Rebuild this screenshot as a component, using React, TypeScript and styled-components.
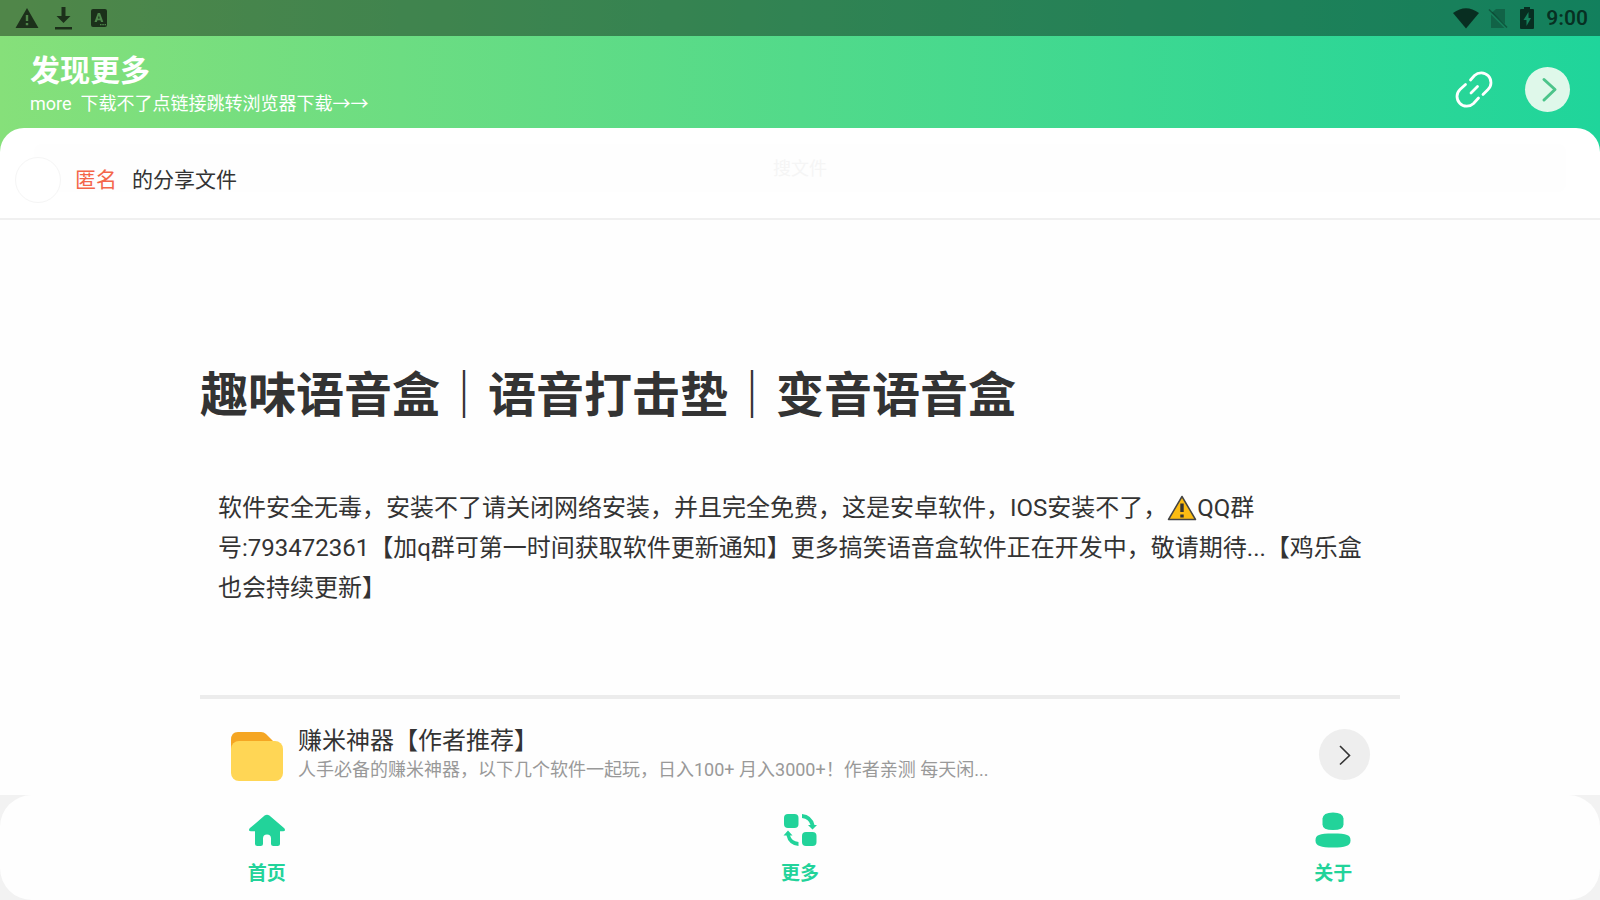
import React from 'react';
import styled, { createGlobalStyle } from 'styled-components';

const GlobalStyle = createGlobalStyle`
  *, *::before, *::after { box-sizing: border-box; }
  body {
    margin: 0;
    background: #fefefe;
    color: #333;
    font-family: Roboto, "Noto Sans CJK SC", sans-serif;
  }
  button, input { font: inherit; }
  h1, h2, p { margin: 0; }
`;

const Page = styled.div`
  min-height: 100vh;
  display: flex;
  flex-direction: column;
`;

const Top = styled.div`
  background: linear-gradient(90deg, #86e07a 0%, #52da8a 50%, #1fd59b 100%);
`;

const StatusBar = styled.div`
  height: 36px;
  padding: 0 12px 0 15px;
  display: flex;
  align-items: center;
  justify-content: space-between;
  background: rgba(0, 0, 0, 0.4);
  color: rgba(0, 0, 0, 0.64);
`;

const StatusGroup = styled.div<{ $gap: number }>`
  display: flex;
  align-items: center;
  gap: ${(p) => p.$gap}px;
  svg { display: block; }
`;

const Clock = styled.span`
  font-size: 21px;
  line-height: 36px;
  font-weight: 600;
`;

const Header = styled.header`
  height: 92px;
  padding: 0 30px;
  display: flex;
  align-items: flex-start;
  justify-content: space-between;
  color: #fff;
`;

const HeaderText = styled.div`
  padding-top: 17px;
`;

const HeaderTitle = styled.h1`
  font-size: 30px;
  line-height: 36px;
  font-weight: 700;
`;

const HeaderNote = styled.p`
  font-size: 18px;
  line-height: 30px;
  white-space: pre;
`;

const HeaderActions = styled.div`
  display: flex;
  align-items: center;
  gap: 30px;
  padding-top: 31px;
`;

const IconButton = styled.button<{ $size: number; $bg?: string }>`
  width: ${(p) => p.$size}px;
  height: ${(p) => p.$size}px;
  padding: 0;
  border: 0;
  border-radius: 50%;
  background: ${(p) => p.$bg ?? 'transparent'};
  display: grid;
  place-items: center;
  flex: none;
  cursor: pointer;
`;

const SheetTop = styled.div`
  display: grid;
  height: 92px;
  background: #fff;
  border-radius: 24px 24px 0 0;
  border-bottom: 2px solid #f0f0f0;
  > * { grid-area: 1 / 1; }
`;

const Search = styled.input`
  margin: 16px 34px 0;
  height: 48px;
  padding: 0;
  border: 0;
  border-radius: 8px;
  background: #fefefe;
  text-align: center;
  font-size: 18px;
  &::placeholder { color: #f5f5f5; opacity: 1; }
`;

const Sharer = styled.div`
  display: flex;
  align-items: center;
  padding: 14px 15px 0;
  font-size: 21px;
  line-height: 30px;
  pointer-events: none;
`;

const Avatar = styled.span`
  width: 46px;
  height: 46px;
  margin-right: 14px;
  border: 1px solid #f5f5f5;
  border-radius: 50%;
  background: #fff;
`;

const SharerName = styled.span`
  color: #f4664a;
  margin-right: 15px;
`;

const Content = styled.main`
  flex: 1;
  padding: 144px 12.5% 0;
`;

const Title = styled.h2`
  font-size: 48px;
  line-height: 64px;
  font-weight: 700;
`;

const Description = styled.p`
  padding: 60px 18px 0;
  font-size: 24px;
  line-height: 40px;
`;

const WarningMark = styled.svg`
  width: 30px;
  height: 26px;
  vertical-align: -5px;
`;

const Divider = styled.hr`
  height: 4px;
  margin: 87px 0 0;
  border: 0;
  background: #ececec;
`;

const FileRow = styled.article`
  display: flex;
  align-items: center;
  padding: 26px 30px 10px;
`;

const FolderIcon = styled.svg`
  width: 54px;
  height: 56px;
`;

const FileText = styled.div`
  flex: 1;
  min-width: 0;
  margin-left: 14px;
`;

const FileName = styled.p`
  font-size: 24px;
  line-height: 32px;
`;

const FileNote = styled.p`
  font-size: 18px;
  line-height: 26px;
  color: #999;
`;

const NavBack = styled.div`
  background: #f2f2f2;
`;

const Nav = styled.nav`
  height: 105px;
  border-radius: 32px;
  background: #fefefe;
  display: grid;
  grid-template-columns: repeat(3, 1fr);
`;

const NavItem = styled.a`
  display: flex;
  flex-direction: column;
  align-items: center;
  padding-top: 16px;
  gap: 11px;
  color: #22d39a;
  font-size: 19px;
  line-height: 28px;
  font-weight: 700;
  text-decoration: none;
`;

const HomeIcon = () => (
  <svg width="38" height="38" viewBox="0 0 38 38" fill="currentColor" aria-hidden="true">
    <path d="M16.6 4.6Q19 2.900 21.400 4.600L36.300 17.300Q38.200 19.900 35 20.300H32V32.500Q32 35 29.500 35H25.500Q23 35 23 32.500V27.500Q23 23.500 19 23.500Q15 23.500 15 27.500V32.500Q15 35 12.500 35H9.500Q7 35 7 32.500V20.300H3Q-.2 19.900 1.700 17.300Z" />
  </svg>
);

const MoreIcon = () => (
  <svg width="38" height="38" viewBox="0 0 38 38" fill="currentColor" aria-hidden="true">
    <rect x="3" y="3" width="14.500" height="14" rx="4" />
    <rect x="21" y="21" width="14.500" height="14" rx="4" />
    <path d="M21 3Q31 4 33.500 14H36L31.500 18.500L27 14H29.500Q28 8 21 7Z" />
    <path d="M17.500 35Q7.500 34 5.500 24.500H2.500L7 19.500L11.500 24.500H9Q10.500 30 17.500 31Z" />
  </svg>
);

const AboutIcon = () => (
  <svg width="38" height="38" viewBox="0 0 38 38" fill="currentColor" aria-hidden="true">
    <path d="M8.500 7.500Q9 1.500 19 1.500Q29 1.500 29.500 7.500V13.500Q29.500 19 19 19Q8.500 19 8.500 13.500Z" />
    <path d="M1.500 29.500C1.500 24 5 22.500 19 22.500S36.500 24 36.500 29.500S31 36.500 19 36.500S1.500 35 1.500 29.500Z" />
  </svg>
);

const navItems = [
  { label: '首页', href: '#home', Icon: HomeIcon },
  { label: '更多', href: '#more', Icon: MoreIcon },
  { label: '关于', href: '#about', Icon: AboutIcon },
];

export default function App() {
  return (
    <Page>
      <GlobalStyle />
      <Top>
        <StatusBar>
          <StatusGroup $gap={13}>
            <svg width="24" height="22" viewBox="0 0 24 22" fill="currentColor" fillRule="evenodd">
              <path d="M12 1L23.500 21H.5ZM10.800 8V14H13.200V8ZM10.800 16V18.300H13.200V16Z" />
            </svg>
            <svg width="23" height="24" viewBox="0 0 23 24" fill="currentColor">
              <path d="M9.500 1H13.500V10H18.500L11.500 17L4.500 10H9.500ZM3 21H20V23.500H3Z" />
            </svg>
            <svg width="22" height="22" viewBox="0 0 22 22" fill="currentColor" fillRule="evenodd">
              <path d="M5 2H17Q19 2 19 4V18Q19 20 17 20H5Q3 20 3 18V4Q3 2 5 2ZM9.800 6L6.500 15H8.800L9.400 13.300H12.400L13 15H15.300L12 6ZM10.900 8.500L11.800 11.500H10ZM12 17V18.300H13.500V17ZM14.300 17V18.300H15.800V17ZM16.600 17V18.300H18V17Z" />
            </svg>
          </StatusGroup>
          <StatusGroup $gap={8}>
            <svg width="28" height="22" viewBox="0 0 28 22" fill="currentColor">
              <path d="M1 6Q14-3.500 27 6L14 21.500Z" />
            </svg>
            <svg width="20" height="22" viewBox="0 0 20 22">
              <path d="M8 2H17V17L4 5.500ZM3 7.500L16.500 21H3Z" fill="currentColor" opacity=".35" />
              <path d="M1 2.500L19 20.500" stroke="currentColor" strokeWidth="1.500" opacity=".5" />
            </svg>
            <svg width="22" height="24" viewBox="0 0 22 24" fill="currentColor" fillRule="evenodd">
              <path d="M8 1H14V3H17Q18 3 18 4V22Q18 23 17 23H5Q4 23 4 22V4Q4 3 5 3H8ZM12.500 6L7.500 14H10.500V20L15 12H12.500Z" />
            </svg>
            <Clock>9:00</Clock>
          </StatusGroup>
        </StatusBar>
        <Header>
          <HeaderText>
            <HeaderTitle>发现更多</HeaderTitle>
            <HeaderNote>{'more  下载不了点链接跳转浏览器下载→→'}</HeaderNote>
          </HeaderText>
          <HeaderActions>
            <IconButton $size={42} aria-label="打开链接">
              <svg width="42" height="42" viewBox="1 1 42 42" fill="none" stroke="#fff" strokeWidth="2.800" strokeLinecap="round">
                <path d="M18.500 12L22.500 7.500A9.500 9.500 0 0 1 36 21.500L31 26.500" />
                <path d="M13.500 16.500L8 21.500A9.500 9.500 0 0 0 21.500 35.500L26.500 30" />
                <path d="M19 25L25.500 18.500" />
              </svg>
            </IconButton>
            <IconButton $size={45} $bg="#dff8ea" aria-label="前往">
              <svg width="45" height="45" viewBox="0 0 45 45" fill="none" stroke="#4cc48a" strokeWidth="3" strokeLinecap="round" strokeLinejoin="round">
                <path d="M19 12.500L30 22.500L19 33" />
              </svg>
            </IconButton>
          </HeaderActions>
        </Header>
        <SheetTop>
          <Search type="text" placeholder="搜文件" aria-label="搜文件" />
          <Sharer>
            <Avatar />
            <SharerName>匿名</SharerName>
            <span>的分享文件</span>
          </Sharer>
        </SheetTop>
      </Top>
      <Content>
        <Title>趣味语音盒｜语音打击垫｜变音语音盒</Title>
        <Description>
          软件安全无毒，安装不了请关闭网络安装，并且完全免费，这是安卓软件，IOS安装不了，
          <WarningMark viewBox="0 0 30 26" role="img" aria-label="警告">
            <path d="M15 1.500L28.500 24.500H1.500Z" fill="#fbbc13" stroke="#444" strokeWidth="1.500" strokeLinejoin="round" />
            <path d="M13.300 8.500H16.700V17H13.300ZM13.300 19.500H16.700V22.500H13.300Z" fill="#333" />
          </WarningMark>
          QQ群<wbr />号:793472361【加q群可第一时间获取软件更新通知】更多搞笑语音盒软件正在开发中，敬请期待...【鸡乐盒也会持续更新】
        </Description>
        <Divider />
        <FileRow>
          <FolderIcon viewBox="0 0 54 56" aria-hidden="true">
            <path d="M1 26V14Q1 6 8 6H31Q34 6 36 8L43 15V26Z" fill="#f5a623" />
            <rect x="1" y="15" width="52" height="40" rx="8" fill="#ffd655" />
          </FolderIcon>
          <FileText>
            <FileName>赚米神器【作者推荐】</FileName>
            <FileNote>人手必备的赚米神器，以下几个软件一起玩，日入100+ 月入3000+！作者亲测 每天闲...</FileNote>
          </FileText>
          <IconButton $size={51} $bg="#eee" aria-label="打开文件">
            <svg width="51" height="51" viewBox="0 0 51 51" fill="none" stroke="#333" strokeWidth="1.600">
              <path d="M21 17L30.500 26.500L21 35.500" />
            </svg>
          </IconButton>
        </FileRow>
      </Content>
      <NavBack>
        <Nav>
          {navItems.map(({ label, href, Icon }) => (
            <NavItem key={label} href={href}>
              <Icon />
              {label}
            </NavItem>
          ))}
        </Nav>
      </NavBack>
    </Page>
  );
}
